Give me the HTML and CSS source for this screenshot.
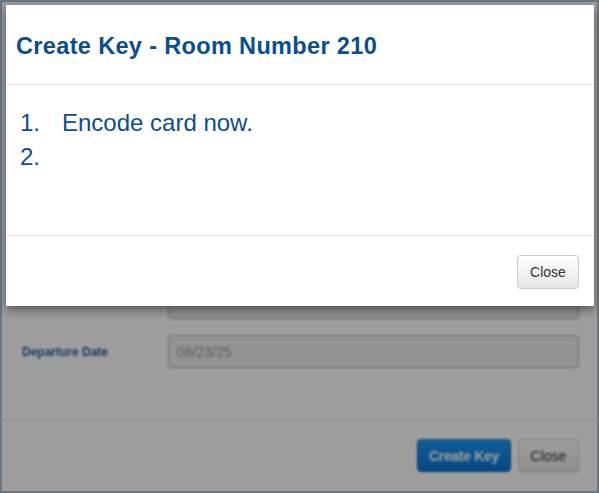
FILE: index.html
```html
<!DOCTYPE html>
<html lang="en">
<head>
<meta charset="utf-8">
<title>Create Key</title>
<link rel="stylesheet" href="styles.css">
</head>
<body>
<div class="page">
  <div class="under">
    <div class="under-body">
      <div class="row row-top">
        <span class="label">Arrival Date</span>
        <div class="field field-tall">08/20/25</div>
      </div>
      <div class="row">
        <span class="label">Departure Date</span>
        <div class="field">08/23/25</div>
      </div>
    </div>
    <div class="under-footer">
      <button class="btn btn-primary">Create Key</button>
      <button class="btn">Close</button>
    </div>
  </div>
  <div class="backdrop"></div>
  <div class="modal">
    <div class="modal-header">
      <h3 class="modal-title">Create Key - Room Number 210</h3>
    </div>
    <div class="modal-body">
      <ol class="steps">
        <li class="step"><span class="num">1.</span><span>Encode card now.</span></li>
        <li class="step"><span class="num">2.</span><span></span></li>
      </ol>
    </div>
    <div class="modal-footer">
      <button class="btn">Close</button>
    </div>
  </div>
</div>
</body>
</html>
```

FILE: styles.css
```css
* { box-sizing: border-box; }
html, body { margin: 0; padding: 0; }
body {
  font-family: "Liberation Sans", Arial, sans-serif;
  width: 599px;
  height: 493px;
  overflow: hidden;
}
.page {
  position: relative;
  width: 599px;
  height: 493px;
  border: 2px solid #687882;
  background: #ffffff;
  display: flex;
  flex-direction: column;
}
.under {
  flex: 1;
  display: flex;
  flex-direction: column;
  filter: blur(1.1px);
}
.under-body {
  flex: 1;
  display: flex;
  flex-direction: column;
  justify-content: flex-end;
  gap: 16px;
  padding: 0 18px 51px 20px;
}
.row {
  display: flex;
  align-items: center;
}
.row-top { align-items: flex-start; }
.row-top .label { padding-top: 8px; }
.label {
  width: 146px;
  font-size: 12px;
  font-weight: bold;
  color: #2a5aa0;
}
.field {
  flex: 1;
  height: 33px;
  border: 1px solid #a9acbc;
  border-radius: 4px;
  background: #eeeeee;
  color: #999;
  font-size: 14px;
  padding: 0 8px;
  display: flex;
  align-items: center;
}
.field-tall { height: 80px; align-items: flex-start; padding-top: 8px; }
.under-footer {
  border-top: 1px solid #e0e0e0;
  padding: 19px 18px 19px 0;
  display: flex;
  justify-content: flex-end;
  gap: 7px;
}
.btn {
  font-family: "Liberation Sans", Arial, sans-serif;
  font-size: 14px;
  height: 34px;
  padding: 0 12px;
  border: 1px solid #cccccc;
  border-radius: 4px;
  color: #333333;
  white-space: nowrap;
  background: linear-gradient(#ffffff, #e6e6e6);
  box-shadow: inset 0 1px 0 rgba(255,255,255,.2), 0 1px 2px rgba(0,0,0,.05);
}
.under-footer .btn { height: 33px; width: 61px; padding: 0; }
.under-footer .btn-primary {
  color: #ffffff;
  width: 94px;
  font-weight: bold;
  letter-spacing: -0.3px;
  border-color: #0a6ac0;
  background: linear-gradient(#1b9af2, #0b74d4);
}
.backdrop {
  position: absolute;
  inset: 0;
  background: rgba(0, 0, 0, 0.38);
}
.modal {
  position: absolute;
  top: 3px;
  left: 4px;
  width: 588px;
  background: #ffffff;
  box-shadow: 0 4px 10px rgba(0, 0, 0, 0.45);
}
.modal-header {
  height: 80px;
  border-bottom: 1px solid #e5e5e5;
  display: flex;
  align-items: center;
  padding: 4px 10px 0;
}
.modal-title {
  margin: 0;
  font-size: 23.5px;
  letter-spacing: 0.35px;
  font-weight: bold;
  color: #0b4e8e;
}
.modal-body {
  height: 150px;
  padding: 21px 14px 0;
}
.steps {
  list-style: none;
  margin: 0;
  padding: 0;
}
.step {
  display: flex;
  font-size: 24px;
  line-height: 34px;
  color: #0d4e8c;
}
.num { width: 42px; }
.modal-footer {
  border-top: 1px solid #e5e5e5;
  padding: 19px 15px 17px;
  display: flex;
  justify-content: flex-end;
}
.modal-footer .btn { width: 62px; padding: 0; }
```
